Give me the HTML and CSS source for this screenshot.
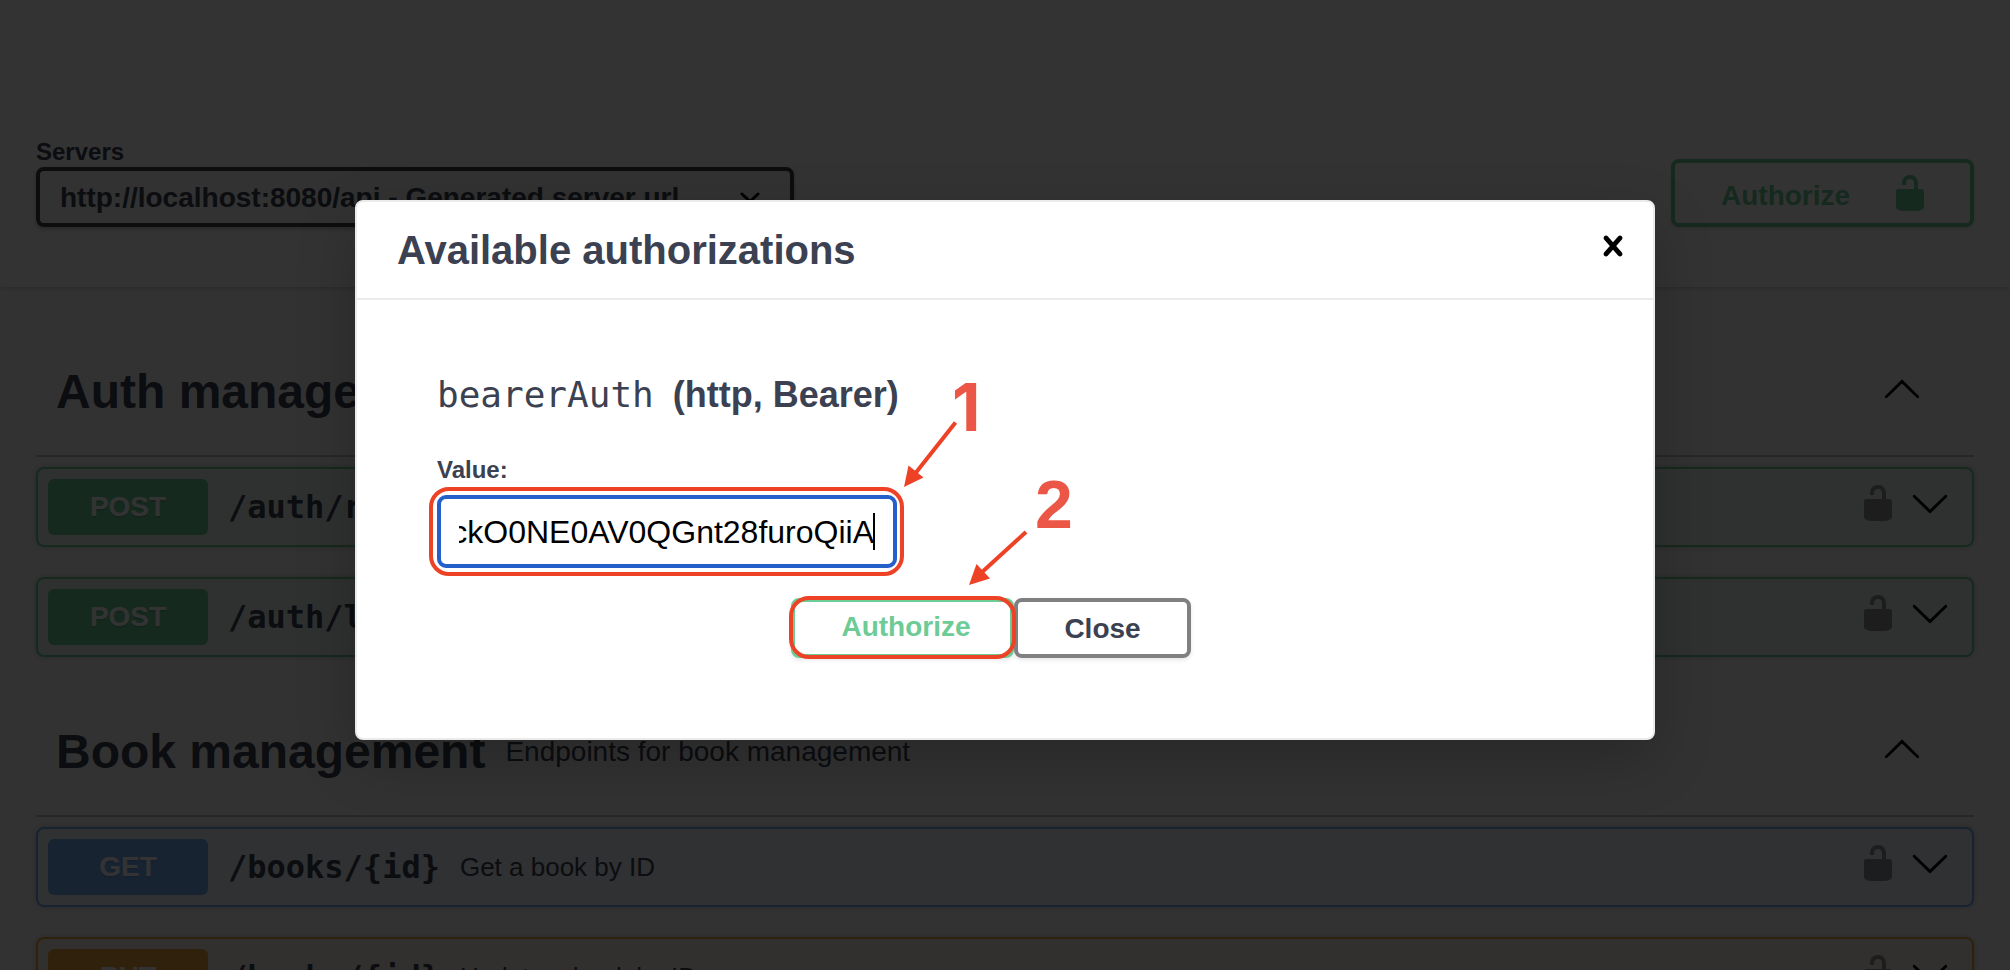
FILE: index.html
```
<!DOCTYPE html>
<html lang="en">
<head>
<meta charset="utf-8">
<title>Swagger UI</title>
<link rel="stylesheet" href="styles.css">
</head>
<body>
<svg class="defs" width="0" height="0" aria-hidden="true">
  <symbol id="unlocked" viewBox="0 0 20 20"><path d="M15.8 8H14V5.6C14 2.703 12.665 1 10 1 7.334 1 6 2.703 6 5.6V6h2v-.801C8 3.754 8.797 3 10 3c1.203 0 2 .754 2 2.199V8H4c-.553 0-1 .646-1 1.199V17c0 .549.428 1.139.951 1.307l1.197.387C5.672 18.861 6.55 19 7.1 19h5.8c.549 0 1.428-.139 1.951-.307l1.196-.387c.524-.167.953-.757.953-1.306V9.199C17 8.646 16.352 8 15.8 8z"/></symbol>
  <symbol id="arrow-up" viewBox="0 0 20 20"><path d="M17.418 14.908c.272.268.709.268.979 0s.271-.701 0-.969l-7.908-7.83c-.27-.268-.707-.268-.979 0l-7.908 7.83c-.27.268-.27.701 0 .969.271.268.709.268.979 0L10 7.767l7.418 7.141z"/></symbol>
  <symbol id="arrow-down" viewBox="0 0 20 20"><path d="M17.418 6.109c.272-.268.709-.268.979 0s.271.701 0 .969l-7.908 7.83c-.27.268-.707.268-.979 0l-7.908-7.83c-.27-.268-.27-.701 0-.969.271-.268.709-.268.979 0L10 13.25l7.418-7.141z"/></symbol>
  <symbol id="close" viewBox="0 0 20 20"><path d="M14.348 14.849c-.469.469-1.229.469-1.697 0L10 11.819l-2.651 3.029c-.469.469-1.229.469-1.697 0-.469-.469-.469-1.229 0-1.697l2.758-3.15-2.759-3.152c-.469-.469-.469-1.228 0-1.697.469-.469 1.228-.469 1.697 0L10 8.183l2.651-3.031c.469-.469 1.228-.469 1.697 0 .469.469.469 1.229 0 1.697l-2.758 3.152 2.758 3.15c.469.469.469 1.229 0 1.698z"/></symbol>
</svg>

<div class="page">
  <section class="schemes">
    <div class="servers">
      <span class="servers-title">Servers</span>
      <div class="select"><span>http://localhost:8080/api - Generated server url</span>
        <svg class="select-arrow" width="20" height="12" viewBox="0 0 20 12"><path d="M2 2l8 7.5L18 2"/></svg>
      </div>
    </div>
    <div class="btn btn-auth"><span>Authorize</span><svg class="icon"><use href="#unlocked"/></svg></div>
  </section>

  <section class="tag">
    <header class="tag-head"><h3>Auth management</h3><small></small><svg class="icon"><use href="#arrow-up"/></svg></header>
    <div class="op post"><span class="method">POST</span><code>/auth/register</code><p></p><svg class="icon lock"><use href="#unlocked"/></svg><svg class="icon"><use href="#arrow-down"/></svg></div>
    <div class="op post"><span class="method">POST</span><code>/auth/login</code><p></p><svg class="icon lock"><use href="#unlocked"/></svg><svg class="icon"><use href="#arrow-down"/></svg></div>
  </section>

  <section class="tag">
    <header class="tag-head"><h3>Book management</h3><small>Endpoints for book management</small><svg class="icon"><use href="#arrow-up"/></svg></header>
    <div class="op get"><span class="method">GET</span><code>/books/{id}</code><p>Get a book by ID</p><svg class="icon lock"><use href="#unlocked"/></svg><svg class="icon"><use href="#arrow-down"/></svg></div>
    <div class="op put"><span class="method">PUT</span><code>/books/{id}</code><p>Update a book by ID</p><svg class="icon lock"><use href="#unlocked"/></svg><svg class="icon"><use href="#arrow-down"/></svg></div>
  </section>
</div>

<div class="backdrop">
  <div class="modal">
    <header class="modal-head"><h2>Available authorizations</h2><svg class="icon"><use href="#close"/></svg></header>
    <div class="modal-body">
      <h4><code>bearerAuth</code><span>(http, Bearer)</span></h4>
      <label class="value-label">Value:</label>
      <div class="input"><div class="input-clip"><span>ckO0NE0AV0QGnt28furoQiiA</span></div><i class="caret"></i></div>
      <div class="actions">
        <div class="btn btn-submit">Authorize</div>
        <div class="btn btn-close">Close</div>
      </div>
    </div>
  </div>
</div>

<svg class="notes" width="2010" height="970" viewBox="0 0 2010 970">
  <rect class="ring" x="431" y="489" width="471" height="85" rx="18"/>
  <rect class="ring" x="791" y="598" width="223" height="59" rx="18"/>
  <path class="shaft" d="M955.5 422.5L914 475"/>
  <path class="head" d="M904 487l4.5-21.5 15 12z"/>
  <path class="shaft" d="M1026 532L980 574"/>
  <path class="head" d="M969 585l7.5-21 13.5 14.5z"/>
  <text class="num num-one" x="952" y="431">1</text>
  <text class="num" x="1035" y="528">2</text>
</svg>
</body>
</html>
```
FILE: styles.css
```
* { box-sizing: border-box; }
html, body { height: 970px; overflow: hidden; }
body {
  margin: 0;
  position: relative;
  background: #fafafa;
  color: #3b4151;
  font-family: "Liberation Sans", Arial, sans-serif;
}
h2, h3, h4, p { margin: 0; }
.defs { position: absolute; }
.icon { width: 40px; height: 40px; flex: none; }

/* Page under the dialog */
.page { height: 970px; overflow: hidden; }
.schemes {
  display: flex;
  justify-content: space-between;
  align-items: flex-end;
  height: 287px;
  padding: 0 36px 60px;
  background: #fff;
  box-shadow: 0 2px 4px rgba(0, 0, 0, .15);
}
.servers { display: flex; flex-direction: column; width: 758px; }
.servers-title { font-size: 24px; font-weight: 700; line-height: 28px; margin-bottom: 1px; }
.select {
  display: flex;
  justify-content: space-between;
  align-items: center;
  height: 60px;
  padding: 1px 30px 0 20px;
  border: 4px solid #41444e;
  border-radius: 8px;
  background: #f7f7f7;
  box-shadow: 0 2px 4px rgba(0, 0, 0, .25);
  font-size: 28px;
  font-weight: 700;
  white-space: nowrap;
}
.select-arrow { fill: none; stroke: #000; stroke-width: 3; stroke-linecap: round; }
.btn {
  display: flex;
  align-items: center;
  justify-content: center;
  height: 60px;
  border: 4px solid #808080;
  border-radius: 8px;
  font-size: 28px;
  font-weight: 700;
  box-shadow: 0 2px 4px rgba(0, 0, 0, .1);
}
.btn-auth {
  justify-content: space-between;
  width: 303px;
  height: 68px;
  padding: 0 40px 0 46px;
  border-color: #6dcb96;
  color: #6dcb96;
}
.btn-auth span { padding-top: 5px; }
.btn-auth .icon { fill: #6dcb96; }

.tag { padding: 0 36px; }
.schemes + .tag { margin-top: 40px; }
.tag-head {
  display: flex;
  align-items: center;
  height: 130px;
  margin-bottom: 10px;
  padding: 2px 52px 0 20px;
  border-bottom: 2px solid rgba(59, 65, 81, .3);
}
.tag-head h3 { font-size: 48px; line-height: 56px; }
.tag-head small { flex: 1; padding: 0 20px; font-size: 28px; }
.tag-head .icon { margin-bottom: 8px; }
.op {
  display: flex;
  align-items: center;
  height: 80px;
  margin-bottom: 30px;
  padding: 10px 22px 10px 10px;
  border: 2px solid;
  border-radius: 8px;
  box-shadow: 0 0 6px rgba(0, 0, 0, .19);
}
.method {
  width: 160px;
  border-radius: 6px;
  color: #fff;
  font-size: 28px;
  font-weight: 700;
  line-height: 56px;
  text-align: center;
  text-shadow: 0 2px 0 rgba(0, 0, 0, .1);
}
.op code { padding: 0 20px; font: 700 32px "DejaVu Sans Mono", monospace; }
.op p { flex: 1; font-size: 26px; }
.op .icon { margin-bottom: 8px; }
.op .lock { margin-right: 12px; opacity: .4; }
.post { border-color: #6dcb96; background: rgba(109, 203, 150, .1); }
.post .method { background: #6dcb96; }
.get { border-color: #77aef8; background: rgba(119, 174, 248, .1); }
.get .method { background: #77aef8; }
.put { border-color: #f0a441; background: rgba(240, 164, 65, .1); }
.put .method { background: #f0a441; }

/* Dialog */
.backdrop { position: absolute; inset: 0; padding: 200px 355px 0; background: rgba(0, 0, 0, .8); }
.modal {
  height: 540px;
  border: 2px solid #ebebeb;
  border-radius: 8px;
  background: #fff;
  box-shadow: 0 20px 60px rgba(0, 0, 0, .2);
}
.modal-head {
  display: flex;
  align-items: center;
  justify-content: space-between;
  height: 98px;
  padding: 0 20px 0 40px;
  border-bottom: 2px solid #ebebeb;
}
.modal-head h2 { font-size: 40px; line-height: 46px; }
.modal-head .icon { margin-bottom: 8px; }
.modal-body { padding: 73px 80px 0; }
h4 { display: flex; align-items: baseline; gap: 19px; font-size: 36px; line-height: 44px; }
h4 code { font: 400 36px/44px "DejaVu Sans Mono", monospace; }
.value-label { display: block; margin-top: 39px; font-size: 24px; font-weight: 700; line-height: 28px; }
.input {
  display: flex;
  align-items: center;
  width: 460px;
  height: 73px;
  margin-top: 11px;
  padding-left: 18px;
  border: 4px solid #255fc9;
  border-radius: 9px;
  color: #000;
  font-size: 32px;
}
.input-clip { display: flex; justify-content: flex-end; width: 415px; padding-top: 2px; overflow: hidden; }
.caret { width: 2px; height: 37px; margin-left: -1px; background: #000; }
.actions { display: flex; margin: 30px 0 0 354px; }
.btn-submit { width: 223px; padding-bottom: 2px; padding-left: 7px; border-color: #6dcb96; color: #6dcb96; }
.btn-close { width: 177px; padding-top: 1px; }

/* Annotations */
.notes { position: absolute; left: 0; top: 0; }
.ring, .shaft { fill: none; stroke: #ed4226; stroke-width: 4; }
.head { fill: #ed4226; }
.num { fill: #ec5646; font: 700 68px "Liberation Sans", Arial, sans-serif; }
.num-one { font-family: Inter, sans-serif; font-size: 66px; }
```
